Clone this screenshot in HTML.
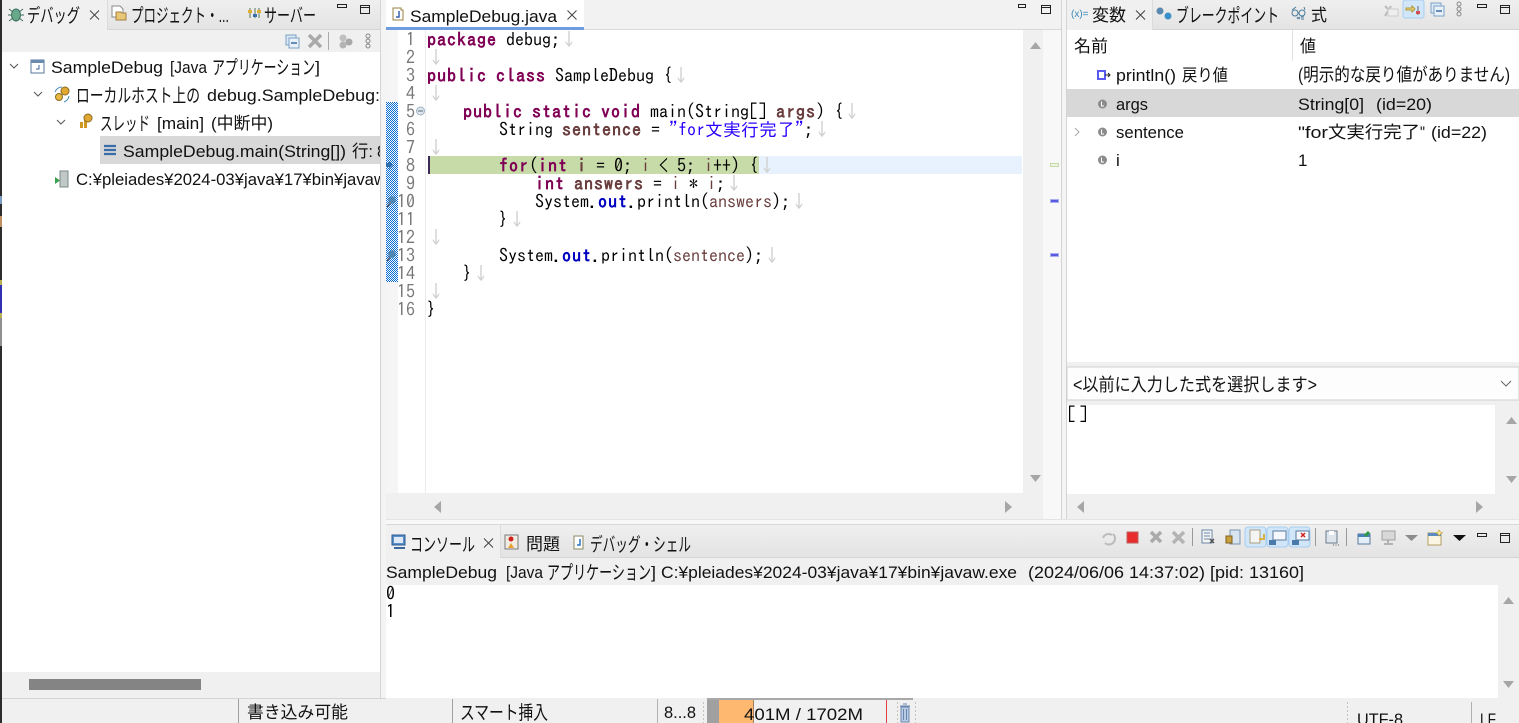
<!DOCTYPE html>
<html><head><meta charset="utf-8"><style>
html,body{margin:0;padding:0;width:1519px;height:723px;overflow:hidden;background:#fff}
svg{display:block}
.u{font-family:"Liberation Sans","Noto Sans CJK JP",sans-serif;font-size:17px;fill:#111}
.u .j{font-size:19px}
.c{font-family:"IPAGothic","Noto Sans CJK JP",monospace;font-size:18px;fill:#000;white-space:pre}
.k{fill:#7f0055;font-weight:bold;letter-spacing:1px}
.v{fill:#6a3e3e;font-weight:bold;letter-spacing:1px}
.w{fill:#6a3e3e}
.f{fill:#0000c0;font-weight:bold;letter-spacing:1px}
.s{fill:#2a00ff}
.a{fill:#d0d0d0}
.n{fill:#787878}
</style></head><body>
<svg width="1519" height="723" viewBox="0 0 1519 723" xmlns="http://www.w3.org/2000/svg">
<defs>
<pattern id="dith" width="2" height="2" patternUnits="userSpaceOnUse"><rect width="2" height="2" fill="#fff"/><rect width="1" height="1" fill="#0068d0"/><rect x="1" y="1" width="1" height="1" fill="#0068d0"/></pattern>
<linearGradient id="tb" x1="0" y1="0" x2="0" y2="1"><stop offset="0" stop-color="#efefef"/><stop offset="1" stop-color="#e3e3e3"/></linearGradient>
<clipPath id="lc"><rect x="0" y="52" width="380" height="620"/></clipPath>
</defs>
<rect width="1519" height="723" fill="#fff"/>

<!-- left panel -->
<rect x="2" y="0" width="378" height="30" fill="url(#tb)"/>
<rect x="2" y="0" width="105" height="30" fill="#f0f0f0"/>
<rect x="107" y="0" width="1" height="30" fill="#dcdcdc"/>
<rect x="2" y="30" width="378" height="22" fill="#f0f0f0"/>
<rect x="108" y="29" width="272" height="1" fill="#d4d4d4"/>
<rect x="2" y="672" width="378" height="26" fill="#f0f0f0"/>
<rect x="29" y="679" width="172" height="11" fill="#848484"/>
<rect x="380" y="0" width="1" height="698" fill="#d4d4d4"/>
<rect x="381" y="0" width="5" height="698" fill="#f4f4f4"/>
<rect x="100" y="136" width="280" height="28" fill="#d8d8d8"/>

<!-- editor -->
<rect x="386" y="0" width="675" height="30" fill="#f2f2f2"/>
<rect x="386" y="0" width="198" height="27" fill="#fff"/>
<rect x="386" y="27" width="198" height="3" fill="#6f9bdf"/>
<rect x="584" y="29" width="477" height="1" fill="#d8d8d8"/>
<rect x="386" y="30" width="12" height="463" fill="#f5f5f5"/>
<rect x="386" y="102" width="12" height="180" fill="url(#dith)"/>
<rect x="425" y="30" width="1" height="463" fill="#ececec"/>
<rect x="1023" y="30" width="20" height="463" fill="#f0f0f0"/>
<rect x="1043" y="30" width="18" height="463" fill="#f8f8f8"/>
<rect x="386" y="493" width="675" height="26" fill="#f0f0f0"/>
<rect x="1043" y="493" width="18" height="26" fill="#f8f8f8"/>
<rect x="1061" y="0" width="1" height="520" fill="#d4d4d4"/>
<rect x="1062" y="0" width="4" height="520" fill="#f4f4f4"/>
<rect x="1066" y="0" width="1" height="520" fill="#d4d4d4"/>
<rect x="386" y="519" width="1133" height="1" fill="#e4e4e4"/>
<rect x="386" y="524" width="1133" height="1" fill="#d8d8d8"/>
<rect x="386" y="520" width="1133" height="4" fill="#f8f8f8"/>
<rect x="429" y="156" width="593" height="18" fill="#e8f2fe"/>
<rect x="429" y="156" width="330" height="18" fill="#c7dba9"/>
<rect x="428" y="156" width="2" height="18" fill="#3a2a55"/>

<!-- right panel -->
<rect x="1067" y="0" width="452" height="30" fill="url(#tb)"/>
<rect x="1067" y="0" width="85" height="30" fill="#f0f0f0"/>
<rect x="1152" y="0" width="1" height="30" fill="#dcdcdc"/>
<rect x="1153" y="29" width="366" height="1" fill="#d4d4d4"/>
<rect x="1292" y="30" width="1" height="31" fill="#e2e2e2"/>
<rect x="1067" y="89" width="452" height="28" fill="#d8d8d8"/>
<rect x="1067" y="362" width="452" height="157" fill="#f0f0f0"/>
<rect x="1067" y="367" width="452" height="33" fill="#fdfdfd" stroke="#d0d0d0"/>
<rect x="1067" y="405" width="428" height="89" fill="#fff"/>

<!-- console -->
<rect x="386" y="525" width="1133" height="33" fill="url(#tb)"/>
<rect x="386" y="525" width="114" height="33" fill="#f0f0f0"/>
<rect x="500" y="525" width="1" height="33" fill="#dcdcdc"/>
<rect x="501" y="557" width="1018" height="1" fill="#d4d4d4"/>
<rect x="386" y="558" width="1133" height="27" fill="#f0f0f0"/>
<rect x="1498" y="585" width="21" height="113" fill="#f0f0f0"/>

<!-- status -->
<rect x="0" y="698" width="1519" height="25" fill="#f0f0f0"/>
<rect x="0" y="698" width="386" height="1" fill="#d4d4d4"/>
<rect x="238" y="699" width="1" height="24" fill="#a0a0a0"/>
<rect x="452" y="699" width="1" height="24" fill="#a0a0a0"/>
<rect x="657" y="699" width="1" height="24" fill="#b0b0b0"/>
<rect x="1471" y="702" width="1" height="21" fill="#b0b0b0"/>
<rect x="707" y="698" width="180" height="25" fill="#f0f0f0"/>
<rect x="707" y="698" width="206" height="2" fill="#a8a8a8"/>
<rect x="707" y="700" width="12" height="23" fill="#a0a0a0"/>
<rect x="719" y="700" width="34" height="23" fill="#ffb870"/>
<rect x="753" y="700" width="1" height="23" fill="#a08060"/>
<rect x="886" y="700" width="1" height="23" fill="#e04040"/>
<path d="M703.500 702V723M897.500 702V723M915.500 702V723M1347.500 702V723" stroke="#c4c4b8" stroke-dasharray="2 2" fill="none"/>
<path d="M900 706h10M903 704h4M901 707h8v15h-8zM903.500 709v11M906.500 709v11" fill="#b8cbe4" stroke="#6a86ae" stroke-width="1"/>

<!-- dark left edge -->
<rect x="0" y="0" width="2" height="723" fill="#2c2c2c"/>
<rect x="0" y="196" width="2" height="8" fill="#7a9cc0"/><rect x="0" y="216" width="2" height="11" fill="#c09060"/>
<rect x="0" y="280" width="2" height="8" fill="#b8b050"/><rect x="0" y="285" width="2" height="28" fill="#3030b0"/><rect x="0" y="313" width="2" height="8" fill="#b8b050"/>
<rect x="0" y="318" width="2" height="28" fill="#909090"/>

<!-- tab texts -->
<g class="u">
<text class="j" x="27" y="22" textLength="53" lengthAdjust="spacingAndGlyphs">デバッグ</text>
<text class="j" x="131" y="22" textLength="98" lengthAdjust="spacingAndGlyphs">プロジェクト・...</text>
<text class="j" x="264" y="22" textLength="52" lengthAdjust="spacingAndGlyphs">サーバー</text>
<text x="410" y="22" textLength="147" lengthAdjust="spacingAndGlyphs">SampleDebug.java</text>
<text x="1092" y="21" textLength="34" lengthAdjust="spacingAndGlyphs">変数</text>
<text class="j" x="1176" y="22" textLength="103" lengthAdjust="spacingAndGlyphs">ブレークポイント</text>
<text x="1311" y="21" textLength="16" lengthAdjust="spacingAndGlyphs">式</text>
</g>

<!-- tree -->
<g class="u" clip-path="url(#lc)">
<text x="51" y="73" textLength="112" lengthAdjust="spacingAndGlyphs">SampleDebug</text>
<text x="170" y="73" textLength="37" lengthAdjust="spacingAndGlyphs">[Java</text>
<text class="j" x="212" y="74" textLength="103" lengthAdjust="spacingAndGlyphs">アプリケーション</text>
<text x="315" y="73" textLength="5" lengthAdjust="spacingAndGlyphs">]</text>
<text class="j" x="76" y="102" textLength="124" lengthAdjust="spacingAndGlyphs">ローカルホスト上の</text>
<text x="207" y="101" textLength="173" lengthAdjust="spacingAndGlyphs">debug.SampleDebug:</text>
<text class="j" x="100" y="130" textLength="50" lengthAdjust="spacingAndGlyphs">スレッド</text>
<text x="157" y="129" textLength="47" lengthAdjust="spacingAndGlyphs">[main]</text>
<text x="211" y="129" textLength="62" lengthAdjust="spacingAndGlyphs">(中断中)</text>
<text x="123" y="157" textLength="223" lengthAdjust="spacingAndGlyphs">SampleDebug.main(String[])</text>
<text x="352" y="157" textLength="21" lengthAdjust="spacingAndGlyphs">行:</text>
<text x="377" y="157" textLength="9" lengthAdjust="spacingAndGlyphs">8</text>
<text x="76" y="185" textLength="310" lengthAdjust="spacingAndGlyphs">C:¥pleiades¥2024-03¥java¥17¥bin¥javaw</text>
</g>

<!-- table -->
<g class="u">
<text x="1074" y="52" textLength="34" lengthAdjust="spacingAndGlyphs">名前</text>
<text x="1300" y="52" textLength="16" lengthAdjust="spacingAndGlyphs">値</text>
<text x="1116" y="81" textLength="60" lengthAdjust="spacingAndGlyphs">println()</text>
<text x="1182" y="81" textLength="46" lengthAdjust="spacingAndGlyphs">戻り値</text>
<text x="1298" y="81" font-size="18" style="font-size:18px" textLength="212" lengthAdjust="spacingAndGlyphs">(明示的な戻り値がありません)</text>
<text x="1116" y="110" textLength="32" lengthAdjust="spacingAndGlyphs">args</text>
<text x="1298" y="110" textLength="66" lengthAdjust="spacingAndGlyphs">String[0]</text>
<text x="1376" y="110" textLength="56" lengthAdjust="spacingAndGlyphs">(id=20)</text>
<text x="1116" y="138" textLength="68" lengthAdjust="spacingAndGlyphs">sentence</text>
<text x="1298" y="138" textLength="30" lengthAdjust="spacingAndGlyphs">"for</text>
<text x="1328" y="138" textLength="92" lengthAdjust="spacingAndGlyphs">文実行完了</text>
<text x="1420" y="138" textLength="5" lengthAdjust="spacingAndGlyphs">"</text>
<text x="1431" y="138" textLength="56" lengthAdjust="spacingAndGlyphs">(id=22)</text>
<text x="1116" y="166">i</text>
<text x="1298" y="166">1</text>
<text x="1073" y="391" style="font-size:18px" textLength="244" lengthAdjust="spacingAndGlyphs">&lt;以前に入力した式を選択します&gt;</text>
</g>

<!-- console + status text -->
<g class="u">
<text class="j" x="410" y="551" textLength="65" lengthAdjust="spacingAndGlyphs">コンソール</text>
<text x="526" y="550" textLength="34" lengthAdjust="spacingAndGlyphs">問題</text>
<text class="j" x="590" y="551" textLength="101" lengthAdjust="spacingAndGlyphs">デバッグ・シェル</text>
<text x="386" y="578" textLength="111" lengthAdjust="spacingAndGlyphs">SampleDebug</text>
<text x="506" y="578" textLength="37" lengthAdjust="spacingAndGlyphs">[Java</text>
<text class="j" x="547" y="579" textLength="104" lengthAdjust="spacingAndGlyphs">アプリケーション</text>
<text x="651" y="578" textLength="5" lengthAdjust="spacingAndGlyphs">]</text>
<text x="661" y="578" textLength="356" lengthAdjust="spacingAndGlyphs">C:¥pleiades¥2024-03¥java¥17¥bin¥javaw.exe</text>
<text x="1028" y="578" textLength="276" lengthAdjust="spacingAndGlyphs">(2024/06/06 14:37:02) [pid: 13160]</text>
<text x="247" y="718" textLength="101" lengthAdjust="spacingAndGlyphs">書き込み可能</text>
<text class="j" x="460" y="719" textLength="88" lengthAdjust="spacingAndGlyphs">スマート挿入</text>
<text x="664" y="718" textLength="32" lengthAdjust="spacingAndGlyphs">8...8</text>
<text x="744" y="720" textLength="119" lengthAdjust="spacingAndGlyphs">401M / 1702M</text>
<text x="1357" y="725" textLength="46" lengthAdjust="spacingAndGlyphs">UTF-8</text>
<text x="1480" y="725" textLength="16" lengthAdjust="spacingAndGlyphs">LF</text>
</g>

<!-- line numbers -->
<g class="c n" text-anchor="end">
<text x="415" y="46">1</text><text x="415" y="64">2</text><text x="415" y="82">3</text><text x="415" y="100">4</text><text x="415" y="118">5</text><text x="415" y="136">6</text><text x="415" y="154">7</text><text x="415" y="172">8</text><text x="415" y="190">9</text><text x="415" y="208">10</text><text x="415" y="226">11</text><text x="415" y="244">12</text><text x="415" y="262">13</text><text x="415" y="280">14</text><text x="415" y="298">15</text><text x="415" y="316">16</text>
</g>

<!-- code -->
<g class="c">
<text x="427" y="46"><tspan class="k">package</tspan> debug;<tspan class="a">↓</tspan></text>
<text x="427" y="64"><tspan class="a">↓</tspan></text>
<text x="427" y="82"><tspan class="k">public</tspan> <tspan class="k">class</tspan> SampleDebug {<tspan class="a">↓</tspan></text>
<text x="427" y="100"><tspan class="a">↓</tspan></text>
<text x="463" y="118"><tspan class="k">public</tspan> <tspan class="k">static</tspan> <tspan class="k">void</tspan> main(String[] <tspan class="v">args</tspan>) {<tspan class="a">↓</tspan></text>
<text x="499" y="136">String <tspan class="v">sentence</tspan> = <tspan class="s">"for文実行完了"</tspan>;<tspan class="a">↓</tspan></text>
<text x="427" y="154"><tspan class="a">↓</tspan></text>
<text x="499" y="172"><tspan class="k">for</tspan>(<tspan class="k">int</tspan> <tspan class="v">i</tspan> = 0; <tspan class="w">i</tspan> &lt; 5; <tspan class="w">i</tspan>++) {<tspan class="a">↓</tspan></text>
<text x="535" y="190"><tspan class="k">int</tspan> <tspan class="v">answers</tspan> = <tspan class="w">i</tspan> * <tspan class="w">i</tspan>;<tspan class="a">↓</tspan></text>
<text x="535" y="208">System.<tspan class="f">out</tspan>.println(<tspan class="w">answers</tspan>);<tspan class="a">↓</tspan></text>
<text x="499" y="226">}<tspan class="a">↓</tspan></text>
<text x="427" y="244"><tspan class="a">↓</tspan></text>
<text x="499" y="262">System.<tspan class="f">out</tspan>.println(<tspan class="w">sentence</tspan>);<tspan class="a">↓</tspan></text>
<text x="463" y="280">}<tspan class="a">↓</tspan></text>
<text x="427" y="298"><tspan class="a">↓</tspan></text>
<text x="427" y="316">}</text>
<text x="1067" y="421">[</text><text x="1079" y="421">]</text>
<text x="386" y="600">0</text>
<text x="386" y="618">1</text>
</g>

<!-- gutter marks -->
<circle cx="420.500" cy="111" r="4" fill="#dfe6ee" stroke="#9fb2c4"/><path d="M418 111h5" stroke="#567"/>
<path d="M386 163h3v-2l4 4-4 4v-2h-3z" fill="#2f6fb0"/>
<circle cx="392" cy="200" r="3.800" fill="#4f86b4"/><path d="M390 203l-3 4" stroke="#556" stroke-width="1.500"/>
<circle cx="392" cy="254" r="3.800" fill="#4f86b4"/><path d="M390 257l-3 4" stroke="#556" stroke-width="1.500"/>

<!-- overview ruler -->
<rect x="1050.500" y="163.500" width="8" height="3" fill="#eef4e4" stroke="#c4d8a8"/>
<rect x="1050.500" y="199.500" width="8" height="3" fill="#5a5ae0" stroke="#a8b0f0"/>
<rect x="1050.500" y="253.500" width="8" height="3" fill="#5a5ae0" stroke="#a8b0f0"/>

<!-- scroll arrows -->
<g fill="#a6a6a6">
<path d="M1030 49l5.500-7 5.500 7z"/><path d="M1030 475h11l-5.500 7z"/>
<path d="M1506 424l5.500-7 5.500 7z"/><path d="M1506 476h11l-5.500 7z"/>
<path d="M1503 604l5.500-7 5.500 7z"/><path d="M1503 681h11l-5.500 7z"/>
<path d="M441 501v12l-7-6z"/><path d="M1005 501v12l7-6z"/>
<path d="M1084 501v12l-7-6z"/><path d="M1476 501v12l7-6z"/>
</g>

<!-- close x -->
<g stroke="#444" stroke-width="1" fill="none">
<path d="M90 10.500l9 9M99 10.500l-9 9"/>
<path d="M567.500 10.500l9 9M576.500 10.500l-9 9"/>
<path d="M1136 10.500l9 9M1145 10.500l-9 9"/>
<path d="M484 538.500l9 9M493 538.500l-9 9"/>
</g>

<!-- min / max -->
<g fill="none" stroke="#222" stroke-width="1">
<rect x="337.500" y="4.500" width="9" height="3"/><rect x="360.500" y="5.500" width="9" height="8"/><path d="M360.500 7.500h9"/>
<rect x="1018.500" y="4.500" width="7" height="3"/><rect x="1041.500" y="5.500" width="9" height="8"/><path d="M1041.500 7.500h9"/>
<rect x="1477.500" y="4.500" width="9" height="3"/><rect x="1500.500" y="5.500" width="9" height="8"/><path d="M1500.500 7.500h9"/>
<rect x="1477.500" y="533.500" width="9" height="3"/><rect x="1500.500" y="533.500" width="9" height="9"/><path d="M1500.500 535.500h9"/>
</g>

<!-- tree chevrons -->
<g fill="none" stroke="#555" stroke-width="1">
<path d="M10 64l4 4 4-4M34 92l4 4 4-4M57 120l4 4 4-4"/>
<path d="M1075 128l4 4-4 4" stroke="#aaa"/>
<path d="M1501 381l5 5 5-5" stroke="#666"/>
</g>

<!-- tab icons -->
<g>
<ellipse cx="16" cy="15" rx="4.500" ry="6" fill="#6aa88c" stroke="#3a6e5c"/>
<path d="M9 9l4 3M23 9l-4 3M8 15h4M24 15h-4M9 21l4-3M23 21l-4-3" stroke="#3a6e5c"/>
<path d="M112 6h8l3 3v8h-11z" fill="#fff" stroke="#8a8a8a"/>
<path d="M116 12h5l1 1h4v7h-10z" fill="#e8c878" stroke="#a08040"/>
<path d="M250 8v10M255 8v10M259 8v10" stroke="#5a7a50"/><rect x="248" y="10" width="4" height="3" fill="#e0b030"/><rect x="253" y="14" width="4" height="3" fill="#3a70b0"/><rect x="257" y="10" width="4" height="3" fill="#e0b030"/>
<path d="M393 8h8v2h2v10h-10z" fill="#fff" stroke="#9a8040"/><path d="M399 11v6h-3" stroke="#3a60b0" stroke-width="1.500" fill="none"/>
<circle cx="1160" cy="11" r="3.500" fill="#5a8ab0"/><circle cx="1168" cy="16" r="3.500" fill="#3a90c8"/>
<text x="1071" y="17" font-family="Liberation Sans,sans-serif" font-size="10" fill="#3a88b8">(x)=</text>
<g fill="none" stroke="#4a7a9a"><circle cx="1295" cy="13" r="3"/><circle cx="1302" cy="13" r="3"/><path d="M1298 13h1M1292 10l4-3M1305 10l-1-3M1297 19l3-2M1297 17l3 2M1301 17h3M1301 19h3"/></g>
<rect x="392" y="535" width="13" height="10" fill="#5a90c8" stroke="#2a5a90"/><rect x="394" y="537" width="9" height="6" fill="#dfe8f4"/><path d="M394 548h11" stroke="#3a6a9c" stroke-width="2"/>
<rect x="505" y="535" width="13" height="14" fill="#f0ece0" stroke="#7a7a80"/><circle cx="511" cy="539" r="2.500" fill="#d02020"/><path d="M508 548l3-5 3 5z" fill="#e8a030"/>
<rect x="574" y="536" width="9" height="13" fill="#fff" stroke="#8a8a60"/><path d="M580 539v6h-3" stroke="#2a70c0" stroke-width="1.500" fill="none"/>
</g>

<!-- left toolbar -->
<g>
<rect x="286" y="35" width="10" height="10" fill="#dbe8f5" stroke="#7da2c6"/><rect x="289" y="38" width="10" height="10" fill="#e8f0f8" stroke="#7da2c6"/><path d="M291 43h6" stroke="#3a6ca4" stroke-width="1.500"/>
<path d="M309 35l12 12M321 35l-12 12" stroke="#aaa" stroke-width="3.500"/>
<rect x="328" y="32" width="1" height="18" fill="#aaa"/>
<circle cx="343" cy="38" r="3.500" fill="#c0c0c0"/><circle cx="349" cy="42" r="3.500" fill="#a8a8a8"/><circle cx="343" cy="45" r="3.500" fill="#b4b4b4"/>
<g fill="none" stroke="#888"><circle cx="368" cy="36" r="2"/><circle cx="368" cy="41" r="2"/><circle cx="368" cy="46" r="2"/></g>
</g>

<!-- tree icons -->
<rect x="31" y="60" width="13" height="13" fill="#fff" stroke="#5a7a9c"/><rect x="31" y="60" width="13" height="3" fill="#6a8ab0"/><path d="M39 65v4h-3" stroke="#4060a0" fill="none"/>
<circle cx="65" cy="91" r="4" fill="#e0a830" stroke="#8a6a20"/><circle cx="59" cy="97" r="3.500" fill="#e8b840" stroke="#8a6a20"/><path d="M55 92a8 8 0 0 1 7-5M69 96a8 8 0 0 1-5 6" stroke="#4a8ab8" fill="none"/>
<rect x="80" y="122" width="3" height="6" fill="#d09820"/><rect x="84" y="120" width="3" height="8" fill="#d09820"/><circle cx="88" cy="118" r="4" fill="#e0a830" stroke="#8a6a20"/>
<path d="M104 146h12M104 150h12M104 154h12" stroke="#3a6ea8" stroke-width="2.200"/>
<rect x="60" y="171" width="8" height="16" fill="#c0c8c8" stroke="#7a8a8a"/><path d="M55 177v7l5-3.500z" fill="#3aa050"/>

<!-- var icons -->
<rect x="1098" y="71" width="7" height="8" fill="#fff" stroke="#5a5af0" stroke-width="2"/><path d="M1105 75h5" stroke="#222"/><path d="M1108 73l2 2-2 2" fill="none" stroke="#222"/>
<g fill="#8c8c8c"><circle cx="1102.500" cy="104" r="4.500"/><circle cx="1102.500" cy="132" r="4.500"/><circle cx="1102.500" cy="160" r="4.500"/></g>
<path d="M1101.500 101.500v4.500h2.500M1101.500 129.500v4.500h2.500M1101.500 157.500v4.500h2.500" stroke="#fff" fill="none"/>

<!-- variables toolbar -->
<rect x="1403" y="0" width="21" height="18" rx="2" fill="#d2e6fa" stroke="#a8cdf0"/>
<path d="M1385 6l10 10M1385 16l6-10" stroke="#bbb" stroke-width="2"/><rect x="1388" y="9" width="10" height="7" fill="#eee" stroke="#ccc"/>
<path d="M1406 8h6v-2l3 3-3 3v-2h-6z" fill="#f0d888" stroke="#b09830"/><path d="M1418 6v9" stroke="#667"/><rect x="1416" y="11" width="4" height="3" fill="#d05050"/>
<rect x="1431" y="3" width="10" height="10" fill="#dbe8f5" stroke="#7da2c6"/><rect x="1434" y="6" width="10" height="10" fill="#e8f0f8" stroke="#7da2c6"/><path d="M1436 11h6" stroke="#3a6ca4" stroke-width="1.500"/>
<g fill="none" stroke="#888"><circle cx="1459" cy="4" r="2"/><circle cx="1459" cy="9" r="2"/><circle cx="1459" cy="14" r="2"/></g>

<!-- console toolbar -->
<g>
<path d="M1103 538a6 6 0 0 1 9-3M1113 534a6 6 0 0 1-8 9" stroke="#bbb" stroke-width="2" fill="none"/>
<rect x="1127" y="532" width="11" height="11" fill="#e82c2c" stroke="#c06060"/>
<path d="M1151 532l10 10M1161 532l-10 10" stroke="#aaa" stroke-width="3.500"/>
<path d="M1173 532l11 11M1184 532l-11 11" stroke="#b4b4b4" stroke-width="3.500"/>
<rect x="1192" y="528" width="1" height="18" fill="#999"/>
<rect x="1202" y="530" width="10" height="13" fill="#f4f4f4" stroke="#6a88a8"/><path d="M1204 533h6M1204 536h6M1204 539h6" stroke="#6a88a8"/><path d="M1210 539l4 4M1214 539l-4 4" stroke="#555" stroke-width="1.500"/>
<rect x="1230" y="530" width="10" height="14" fill="#d8e4f0" stroke="#7a94b0"/><rect x="1226" y="536" width="6" height="7" fill="#c8a040" stroke="#806020"/>
<rect x="1245" y="527" width="21" height="20" rx="3" fill="#d2e6fa" stroke="#a8cdf0"/>
<rect x="1267" y="527" width="21" height="20" rx="3" fill="#d2e6fa" stroke="#a8cdf0"/>
<rect x="1289" y="527" width="21" height="20" rx="3" fill="#d2e6fa" stroke="#a8cdf0"/>
<rect x="1250" y="530" width="10" height="13" fill="#f4f4f4" stroke="#a8a080"/><path d="M1264 534v5h-5" stroke="#e0b040" stroke-width="2" fill="none"/>
<rect x="1273" y="531" width="13" height="9" fill="#f4f8fc" stroke="#5a7a9c"/><rect x="1269" y="540" width="7" height="5" fill="#4a7aac"/>
<rect x="1296" y="531" width="13" height="9" fill="#f4f8fc" stroke="#5a7a9c"/><rect x="1292" y="540" width="7" height="5" fill="#4a7aac"/><path d="M1301 533l4 4M1305 533l-4 4" stroke="#d02020" stroke-width="1.500"/>
<rect x="1315" y="528" width="1" height="18" fill="#999"/>
<rect x="1326" y="531" width="11" height="12" fill="#dde4ec" stroke="#6a7a8c"/><rect x="1329" y="531" width="5" height="4" fill="#fff"/><path d="M1333 545h6" stroke="#556" stroke-dasharray="1 1.500"/>
<rect x="1346" y="528" width="1" height="18" fill="#999"/>
<rect x="1358" y="534" width="12" height="10" fill="#e4eef8" stroke="#5a7a9c"/><rect x="1358" y="534" width="12" height="3" fill="#4a80b8"/><path d="M1365 536l4-4" stroke="#2a9a40" stroke-width="3"/>
<rect x="1382" y="531" width="13" height="9" fill="#d8d8d8" stroke="#a0a0a0"/><path d="M1388 540v3M1384 544h9" stroke="#a0a0a0" stroke-width="1.500"/>
<path d="M1405 535h13l-6.500 6z" fill="#8c8c8c"/>
<rect x="1428" y="533" width="13" height="12" fill="#fbf6e4" stroke="#b0a060"/><rect x="1428" y="533" width="13" height="3" fill="#5a8ac0"/><path d="M1439 530l1.500 2 2 .5-2 1.500-1.500 2-1-2-2-1 2-1z" fill="#f8e8a0" stroke="#c0a030" stroke-width=".6"/>
<path d="M1453 535h13l-6.500 6z" fill="#111"/>
</g>
</svg>
</body></html>
